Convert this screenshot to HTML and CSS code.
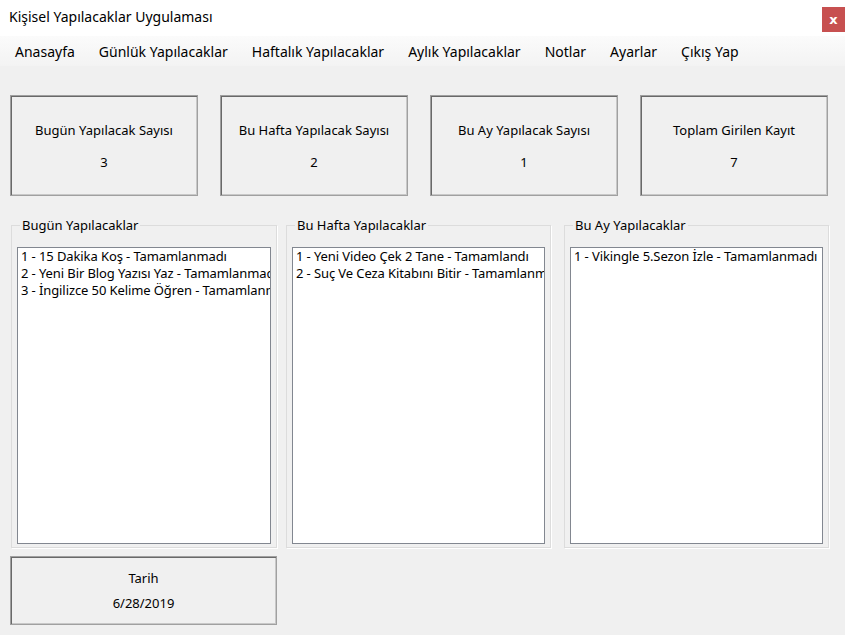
FILE: index.html
```html
<!DOCTYPE html>
<html lang="tr">
<head>
<meta charset="utf-8">
<title>Kişisel Yapılacaklar Uygulaması</title>
<link rel="stylesheet" href="styles.css">
</head>
<body>
<div class="window">
  <div class="titlebar">
    <span class="title">Kişisel Yapılacaklar Uygulaması</span>
    <span class="close">x</span>
  </div>
  <nav class="menubar">
    <span class="menu-item">Anasayfa</span>
    <span class="menu-item">Günlük Yapılacaklar</span>
    <span class="menu-item">Haftalık Yapılacaklar</span>
    <span class="menu-item">Aylık Yapılacaklar</span>
    <span class="menu-item">Notlar</span>
    <span class="menu-item">Ayarlar</span>
    <span class="menu-item">Çıkış Yap</span>
  </nav>
  <div class="stats">
    <div class="stat"><div class="stat-label">Bugün Yapılacak Sayısı</div><div class="stat-value">3</div></div>
    <div class="stat"><div class="stat-label">Bu Hafta Yapılacak Sayısı</div><div class="stat-value">2</div></div>
    <div class="stat"><div class="stat-label">Bu Ay Yapılacak Sayısı</div><div class="stat-value">1</div></div>
    <div class="stat"><div class="stat-label">Toplam Girilen Kayıt</div><div class="stat-value">7</div></div>
  </div>
  <div class="groups">
    <fieldset class="group g1">
      <legend>Bugün Yapılacaklar</legend>
      <div class="listbox">
        <div class="item">1 - 15 Dakika Koş - Tamamlanmadı</div>
        <div class="item">2 - Yeni Bir Blog Yazısı Yaz - Tamamlanmadı</div>
        <div class="item">3 - İngilizce 50 Kelime Öğren - Tamamlanmadı</div>
      </div>
    </fieldset>
    <fieldset class="group g2">
      <legend>Bu Hafta Yapılacaklar</legend>
      <div class="listbox">
        <div class="item">1 - Yeni Video Çek 2 Tane - Tamamlandı</div>
        <div class="item">2 - Suç Ve Ceza Kitabını Bitir - Tamamlanmadı</div>
      </div>
    </fieldset>
    <fieldset class="group g3">
      <legend>Bu Ay Yapılacaklar</legend>
      <div class="listbox">
        <div class="item">1 - Vikingle 5.Sezon İzle - Tamamlanmadı</div>
      </div>
    </fieldset>
  </div>
  <div class="datebox">
    <div class="stat-label">Tarih</div>
    <div class="date-value">6/28/2019</div>
  </div>
</div>
</body>
</html>
```
FILE: styles.css
```css
* { box-sizing: border-box; }
html, body { margin: 0; padding: 0; }
body {
  background: #f0f0f0;
  font-family: "Noto Sans", "Open Sans", sans-serif;
  color: #000;
}
.window {
  width: 845px;
  height: 635px;
  background: #f0f0f0;
  overflow: hidden;
}
.titlebar {
  height: 36px;
  background: #fff;
  display: flex;
  align-items: flex-start;
}
.title {
  font-size: 14px;
  padding-left: 9px;
  padding-top: 7px;
}
.close {
  margin-left: auto;
  margin-top: 7px;
  width: 23px;
  height: 25px;
  background: #c75050;
  color: #fff;
  font-weight: bold;
  font-size: 13px;
  display: flex;
  align-items: center;
  justify-content: center;
  font-family: "DejaVu Sans", sans-serif;
}
.menubar {
  height: 30px;
  background: linear-gradient(#fbfbfb, #f3f3f3);
  display: flex;
  align-items: center;
  padding-left: 15px;
  gap: 24px;
  font-size: 14px;
}
.stats {
  display: flex;
  gap: 22px;
  padding: 29px 0 0 10px;
}
.stat {
  width: 188px;
  height: 101px;
  border: 1px solid #a0a0a0;
  box-shadow: inset 1px 1px 0 #696969, inset -1px -1px 0 #c8c8c8;
  display: flex;
  flex-direction: column;
  align-items: center;
  padding-top: 25px;
}
.stat-label {
  font-size: 13px;
  height: 20px;
}
.stat-value {
  font-size: 13px;
  margin-top: 12px;
}
.groups {
  display: flex;
  padding-left: 11px;
  margin-top: 21px;
}
.group {
  margin: 0;
  min-width: 0;
  height: 331px;
  border: 1px solid #dcdcdc;
  box-shadow: 1px 1px 0 #fff;
  padding: 14px 5px 4px 5px;
  font-size: 13px;
}
.g1 { width: 266px; }
.g2 { width: 265px; margin-left: 9px; }
.g3 { width: 265px; margin-left: 13px; }
.group legend {
  padding: 0 2px;
  margin-left: 3px;
  font-size: 13px;
  line-height: 16px;
}
.listbox {
  background: #fff;
  border: 1px solid #828790;
  height: 297px;
  padding: 0 0 0 3px;
  overflow: hidden;
}
.item {
  font-size: 13px;
  line-height: 17px;
  white-space: nowrap;
  overflow: hidden;
  letter-spacing: -0.1px;
}
.datebox {
  margin: 8px 0 0 10px;
  width: 267px;
  height: 69px;
  border: 1px solid #a0a0a0;
  box-shadow: inset 1px 1px 0 #696969, inset -1px -1px 0 #c8c8c8;
  display: flex;
  flex-direction: column;
  align-items: center;
  padding-top: 12px;
}
.date-value {
  font-size: 13px;
  margin-top: 5px;
}
```
